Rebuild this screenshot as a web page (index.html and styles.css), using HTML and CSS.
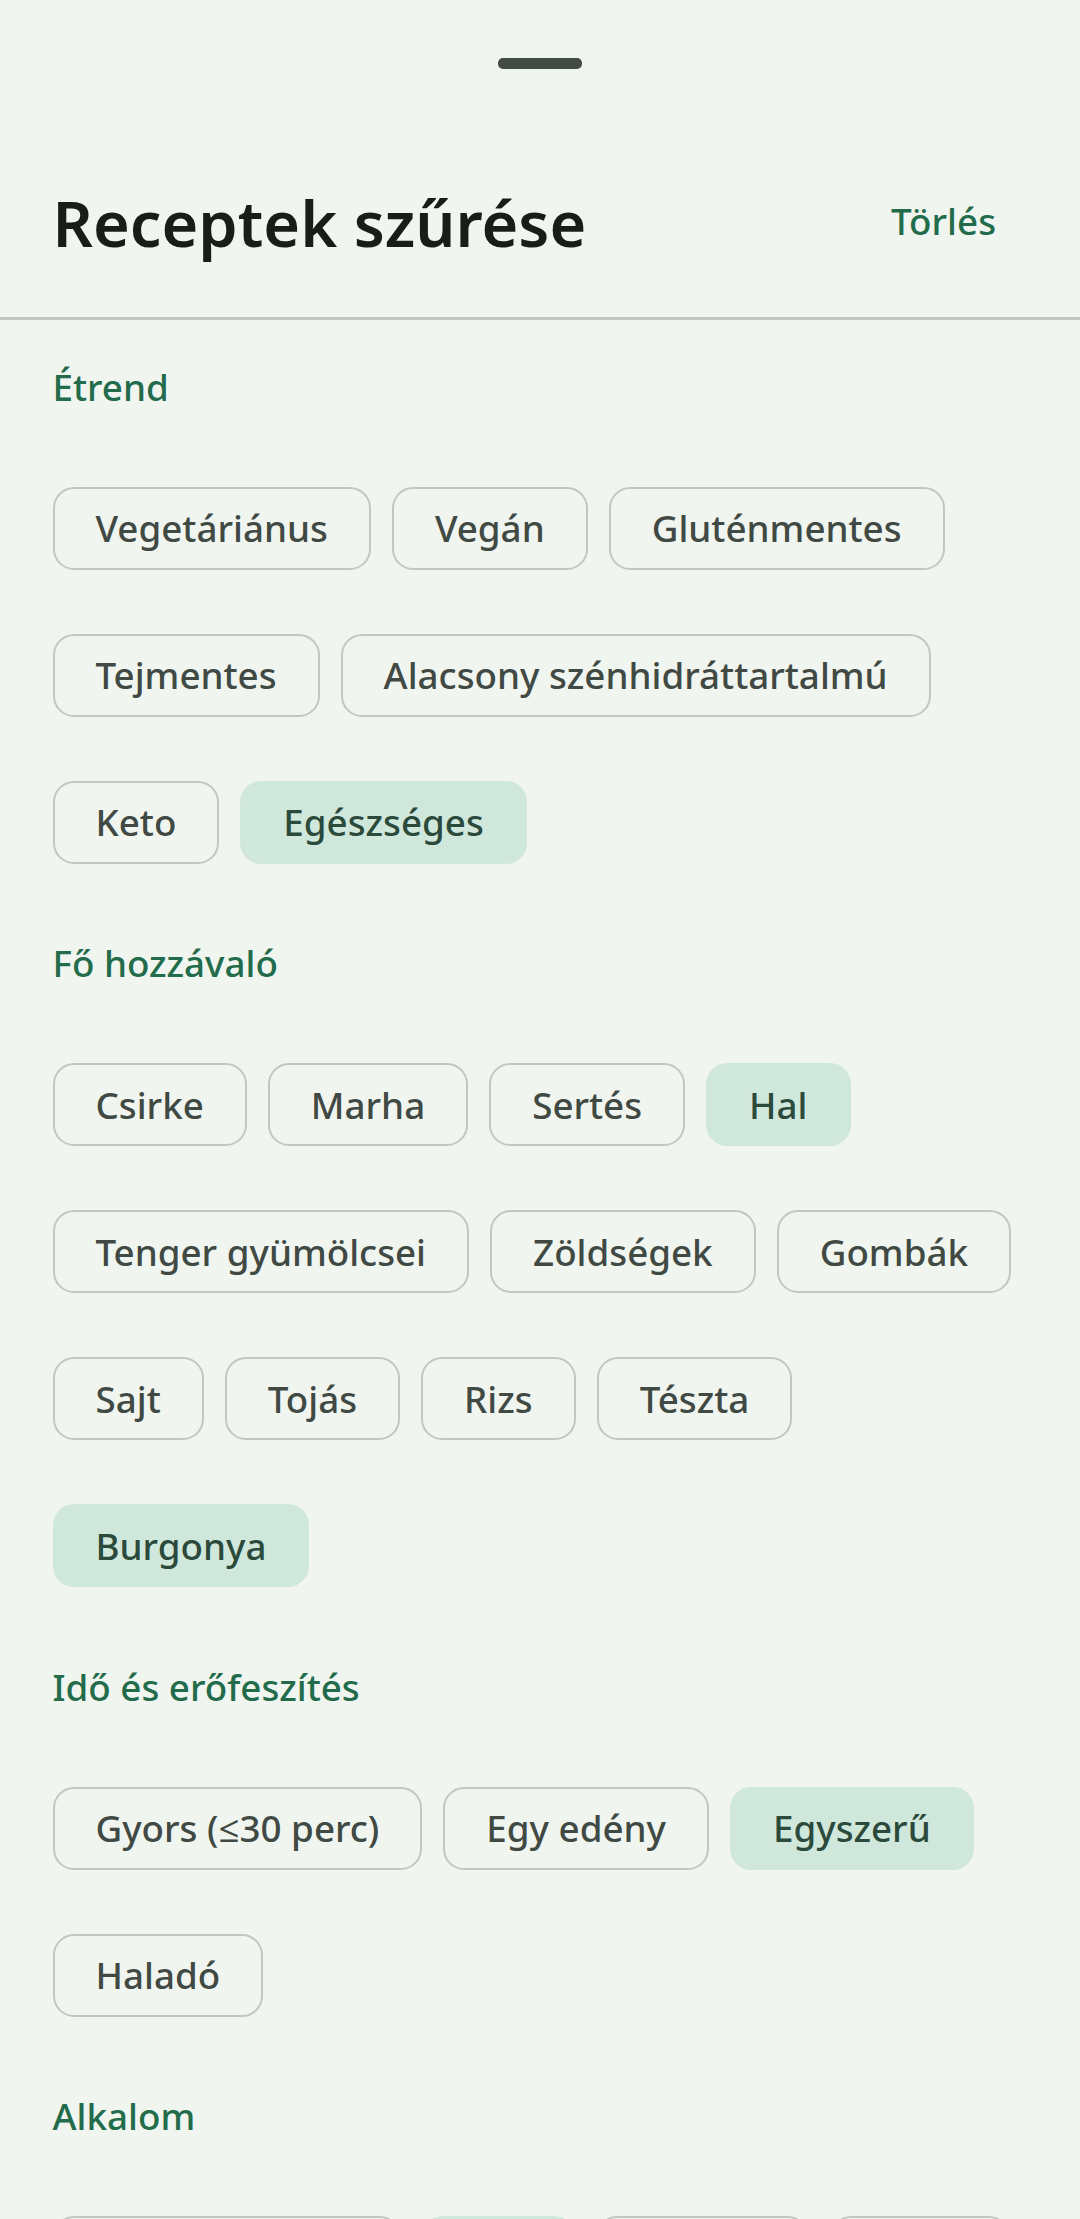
FILE: index.html
```html
<!DOCTYPE html>
<html lang="hu">
<head>
<meta charset="UTF-8">
<meta name="viewport" content="width=device-width, initial-scale=1.0">
<title>Receptek szűrése</title>
<link rel="stylesheet" href="styles.css">
</head>
<body>
  <div class="sheet">
    <div class="handle"></div>

    <div class="header">
      <h1>Receptek szűrése</h1>
      <button class="text-btn">Törlés</button>
    </div>
    <div class="divider"></div>

    <div class="filters">
      <h2 class="section-title">Étrend</h2>
      <div class="chips">
        <span class="chip">Vegetáriánus</span>
        <span class="chip">Vegán</span>
        <span class="chip">Gluténmentes</span>
        <span class="chip">Tejmentes</span>
        <span class="chip">Alacsony szénhidráttartalmú</span>
        <span class="chip">Keto</span>
        <span class="chip selected">Egészséges</span>
      </div>

      <h2 class="section-title">Fő hozzávaló</h2>
      <div class="chips">
        <span class="chip">Csirke</span>
        <span class="chip">Marha</span>
        <span class="chip">Sertés</span>
        <span class="chip selected">Hal</span>
        <span class="chip">Tenger gyümölcsei</span>
        <span class="chip">Zöldségek</span>
        <span class="chip">Gombák</span>
        <span class="chip">Sajt</span>
        <span class="chip">Tojás</span>
        <span class="chip">Rizs</span>
        <span class="chip">Tészta</span>
        <span class="chip selected">Burgonya</span>
      </div>

      <h2 class="section-title">Idő és erőfeszítés</h2>
      <div class="chips">
        <span class="chip">Gyors (≤30 perc)</span>
        <span class="chip">Egy edény</span>
        <span class="chip selected">Egyszerű</span>
        <span class="chip">Haladó</span>
      </div>

      <h2 class="section-title">Alkalom</h2>
      <div class="chips">
        <span class="chip">Hétköznapi est</span>
        <span class="chip selected">Buli</span>
        <span class="chip">Ünnepi</span>
        <span class="chip">Nyári</span>
      </div>
    </div>
  </div>
</body>
</html>
```

FILE: styles.css
```css
html, body {
  overflow: hidden;
}
body {
  margin: 0;
  font-family: "Noto Sans", "Open Sans", sans-serif;
  background-color: #f0f5ef;
  color: #171d19;
}
.sheet {
  display: flex;
  flex-direction: column;
}
.handle {
  width: 84px;
  height: 10.5px;
  border-radius: 5px;
  background-color: #434b45;
  margin: 58px auto 0;
}
.header {
  display: flex;
  align-items: center;
  justify-content: space-between;
  padding: 0 52.5px;
  margin: 112.5px 0 52px;
}
.header h1 {
  margin: 0;
  font-size: 63px;
  line-height: 84px;
  font-weight: 600;
  color: #171d19;
}
.text-btn {
  font-family: inherit;
  font-size: 36.75px;
  font-weight: 500;
  line-height: 52px;
  color: #226b4b;
  background: none;
  border: none;
  padding: 0 31.5px;
  margin: 0 0 4px;
  cursor: pointer;
}
.divider {
  height: 2.6px;
  background-color: #c4c8c2;
}
.filters {
  padding: 41px 52.5px 0;
}
.section-title {
  margin: 0 0 74px;
  font-size: 36.75px;
  line-height: 52px;
  font-weight: 500;
  color: #226b4b;
}
.chips {
  display: flex;
  flex-wrap: wrap;
  gap: 64px 21px;
  margin-bottom: 73.5px;
}
.chip {
  display: flex;
  align-items: center;
  box-sizing: border-box;
  height: 83px;
  padding: 0 41px;
  border: 2.6px solid #c2c8c1;
  border-radius: 21px;
  font-size: 36.75px;
  line-height: 52px;
  font-weight: 500;
  color: #404943;
  white-space: nowrap;
}
.chip.selected {
  background-color: #d0e8dc;
  border-color: transparent;
  color: #2c4a3b;
}
```
